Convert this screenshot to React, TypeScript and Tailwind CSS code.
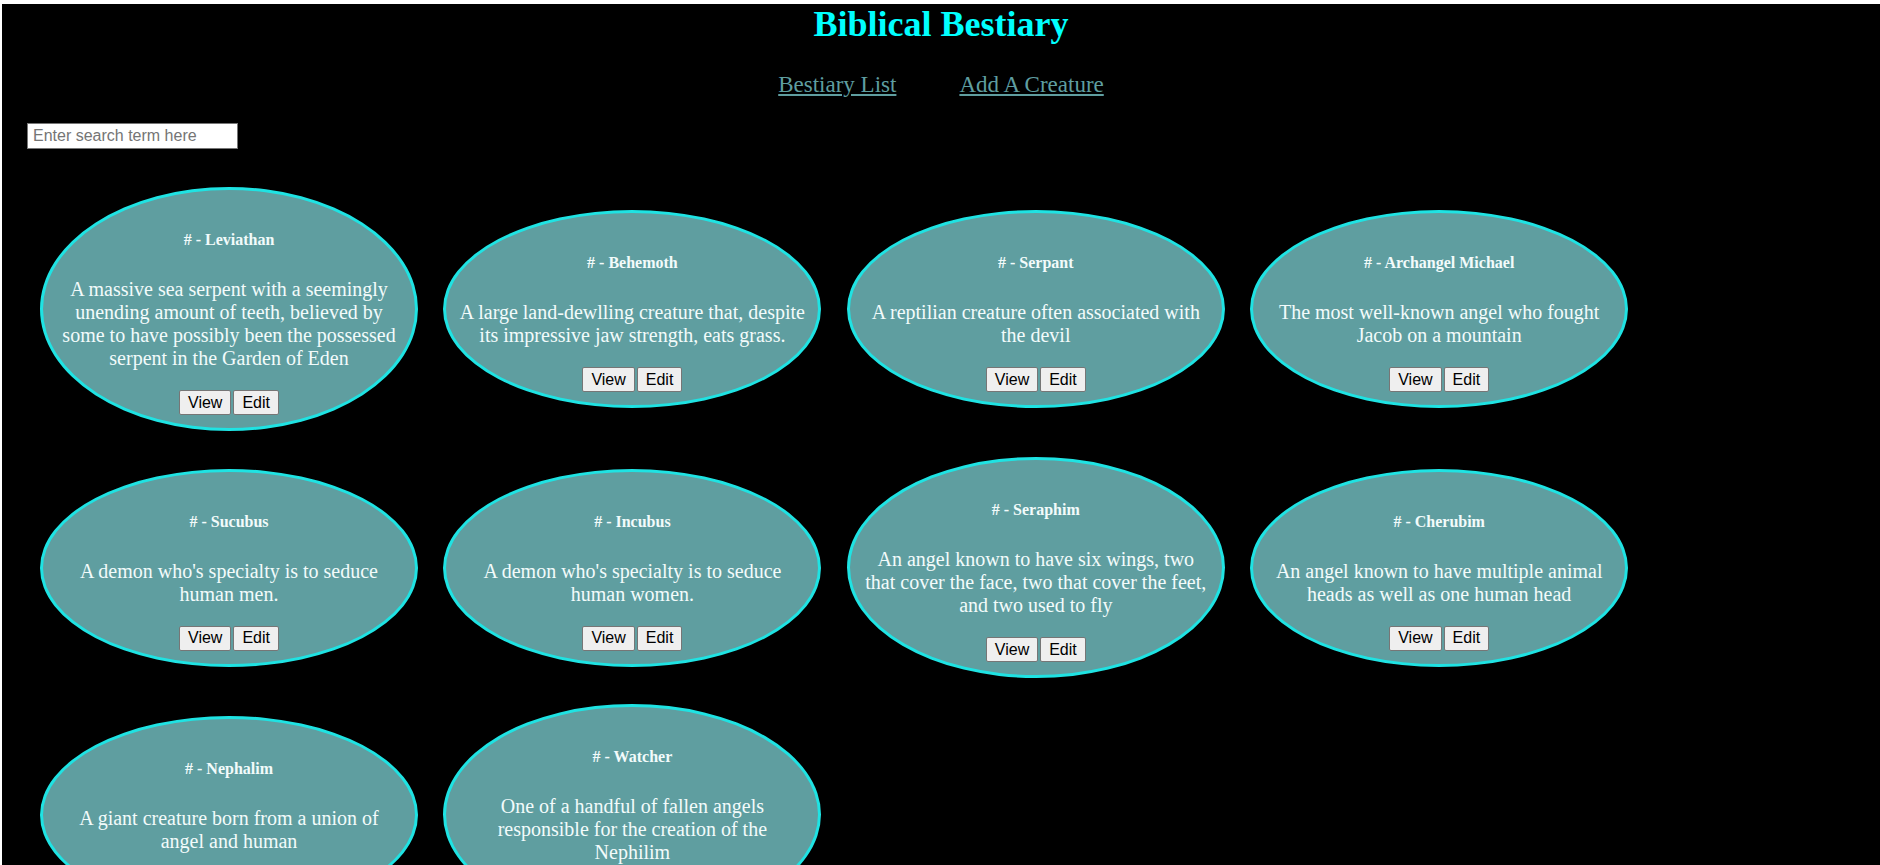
import React from "react";

const creatures = [
  { name: "Leviathan", desc: "A massive sea serpent with a seemingly unending amount of teeth, believed by some to have possibly been the possessed serpent in the Garden of Eden" },
  { name: "Behemoth", desc: "A large land-dewlling creature that, despite its impressive jaw strength, eats grass." },
  { name: "Serpant", desc: "A reptilian creature often associated with the devil" },
  { name: "Archangel Michael", desc: "The most well-known angel who fought Jacob on a mountain" },
  { name: "Sucubus", desc: "A demon who's specialty is to seduce human men." },
  { name: "Incubus", desc: "A demon who's specialty is to seduce human women." },
  { name: "Seraphim", desc: "An angel known to have six wings, two that cover the face, two that cover the feet, and two used to fly" },
  { name: "Cherubim", desc: "An angel known to have multiple animal heads as well as one human head" },
  { name: "Nephalim", desc: "A giant creature born from a union of angel and human" },
  { name: "Watcher", desc: "One of a handful of fallen angels responsible for the creation of the Nephilim" },
];

function Card({ name, desc }: { name: string; desc: string }) {
  return (
    <div className="flex w-[378px] flex-col items-center rounded-[50%] border-[3px] border-[#1fe3e3] bg-[#5f9ea0] px-[13px] pt-[41px] pb-[13px] text-center text-[#f2fbfb] [font-family:'Liberation_Serif',serif]">
      <div className="text-[16px] font-bold leading-[18px]"># - {name}</div>
      <p className="mt-[29px] text-[20px] leading-[23px]">{desc}</p>
      <div className="mt-[20px] flex gap-[2px] [font-family:'Liberation_Sans',Arial,sans-serif]">
        <button className="h-[25px] rounded-[2px] border border-[#767676] bg-[#efefef] px-[8px] text-[16px] leading-[18px] text-black">View</button>
        <button className="h-[25px] rounded-[2px] border border-[#767676] bg-[#efefef] px-[8px] text-[16px] leading-[18px] text-black">Edit</button>
      </div>
    </div>
  );
}

export default function App() {
  return (
    <div className="h-screen overflow-hidden bg-white pt-[4px] pl-[2px]">
      <div className="min-h-[1100px] bg-black">
        <h1 className="pt-[2px] text-center text-[36px] font-bold leading-[36px] text-[#00ffff] [font-family:'Liberation_Serif',serif]">
          Biblical Bestiary
        </h1>
        <nav className="mt-[30px] flex justify-center gap-[63px] text-[23px] leading-[26px] [font-family:'Liberation_Serif',serif]">
          <a href="#" className="text-[#5f9ea0] underline">Bestiary List</a>
          <a href="#" className="text-[#5f9ea0] underline">Add A Creature</a>
        </nav>
        <div className="mt-[25px] pl-[25px]">
          <input
            type="text"
            placeholder="Enter search term here"
            className="h-[26px] w-[211px] border border-[#767676] bg-white pl-[5px] text-[16px] text-black placeholder:text-[#757575] [font-family:'Liberation_Sans',Arial,sans-serif]"
          />
        </div>
        <div className="mt-[38px] grid grid-cols-[repeat(4,378px)] items-center gap-x-[25.4px] gap-y-[26px] pl-[38px]">
          {creatures.map((c) => (
            <Card key={c.name} name={c.name} desc={c.desc} />
          ))}
        </div>
      </div>
    </div>
  );
}
